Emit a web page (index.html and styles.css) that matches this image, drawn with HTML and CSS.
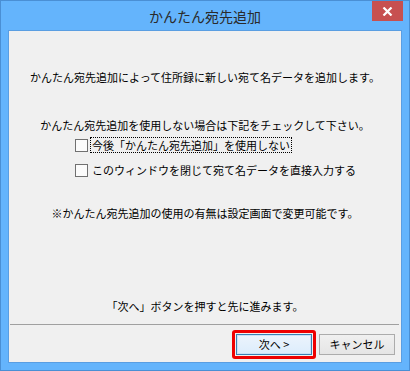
FILE: index.html
```html
<!DOCTYPE html>
<html lang="ja">
<head>
<meta charset="utf-8">
<title>かんたん宛先追加</title>
<link rel="stylesheet" href="styles.css">
</head>
<body>
<div class="window">
  <div class="titlebar">
    <span class="title">かんたん宛先追加</span>
    <button class="close" aria-label="閉じる">
      <svg width="11" height="9" viewBox="0 0 11 9"><path d="M1.5 0.5 L9.5 8.5 M9.5 0.5 L1.5 8.5" stroke="#fff" stroke-width="2.2" fill="none"/></svg>
    </button>
  </div>
  <div class="client">
    <p class="msg msg1">かんたん宛先追加によって住所録に新しい宛て名データを追加します。</p>
    <p class="msg msg2">かんたん宛先追加を使用しない場合は下記をチェックして下さい。</p>
    <div class="checks">
      <label class="check"><span class="box"></span><span class="lbl focus">今後「かんたん宛先追加」を使用しない</span></label>
      <label class="check"><span class="box"></span><span class="lbl">このウィンドウを閉じて宛て名データを直接入力する</span></label>
    </div>
    <p class="msg note">※かんたん宛先追加の使用の有無は設定画面で変更可能です。</p>
    <p class="msg proceed">「次へ」ボタンを押すと先に進みます。</p>
    <div class="sep"></div>
    <div class="buttons">
      <div class="btn-wrap"><button class="btn primary">次へ &gt;</button><span class="highlight"></span></div>
      <button class="btn">キャンセル</button>
    </div>
  </div>
</div>
</body>
</html>
```

FILE: styles.css
```css
* { box-sizing: border-box; }
html, body { margin: 0; padding: 0; }
body {
  font-family: "Noto Sans CJK JP", "Noto Sans", sans-serif;
  background: #63b3fb;
}
.window {
  width: 410px;
  height: 371px;
  border: 1px solid #4a8fd4;
  background: #64b4fc;
  display: flex;
  flex-direction: column;
}
.titlebar {
  position: relative;
  height: 29px;
  display: flex;
  align-items: center;
  justify-content: center;
}
.title {
  font-size: 14px;
  color: #2a2a2a;
  line-height: 16px;
  margin-top: 1px;
}
.close {
  position: absolute;
  top: 0;
  right: 6px;
  width: 31px;
  height: 20px;
  border: 0;
  padding: 0;
  margin: 0;
  background: #c75050;
  display: flex;
  align-items: center;
  justify-content: center;
}
.close svg { display: block; }
.client {
  margin: 0 7px;
  height: 333px;
  border: 1px solid #5a9ee2;
  background: #f0f0f0;
  display: flex;
  flex-direction: column;
  font-size: 11px;
  color: #000;
}
.msg {
  margin: 0;
  height: 16px;
  line-height: 16px;
  text-align: center;
  white-space: nowrap;
}
.msg1 { margin-top: 38px; }
.msg2 { margin-top: 32px; }
.checks {
  margin-top: 4px;
  padding-left: 66px;
  display: flex;
  flex-direction: column;
  gap: 9px;
}
.check {
  display: flex;
  align-items: center;
  height: 16px;
}
.box {
  width: 13px;
  height: 13px;
  border: 1px solid #707070;
  background: #fbfbfb;
  flex: none;
}
.lbl {
  margin-left: 2px;
  padding: 0 1px;
  height: 16px;
  line-height: 14px;
  border: 1px solid transparent;
  white-space: nowrap;
}
.lbl.focus { border: 1px dotted #000; }
.note { margin-top: 27px; }
.proceed { margin-top: 77px; }
.sep {
  margin: 10px 2px 0 1px;
  height: 1px;
  background: #a0a0a0;
}
.buttons {
  margin-top: 9px;
  padding-right: 6px;
  display: flex;
  justify-content: flex-end;
  gap: 7px;
}
.btn-wrap { position: relative; display: flex; }
.btn {
  width: 76px;
  height: 21px;
  margin: 0;
  padding: 0;
  font-family: "Noto Sans CJK JP", "Noto Sans", sans-serif;
  font-size: 11px;
  line-height: 19px;
  color: #000;
  border: 1px solid #acacac;
  background: linear-gradient(#f0f0f0, #e5e5e5);
}
.btn.primary {
  border: 1px solid #3c7fb1;
  box-shadow: inset 0 0 0 1px #c8e2f8;
  background: linear-gradient(#ecf4fc, #dcecfc);
}
.highlight {
  position: absolute;
  left: -4px;
  top: -4px;
  right: -4px;
  bottom: -4px;
  border: 3px solid #ee0000;
  border-radius: 3px;
  pointer-events: none;
}
```
